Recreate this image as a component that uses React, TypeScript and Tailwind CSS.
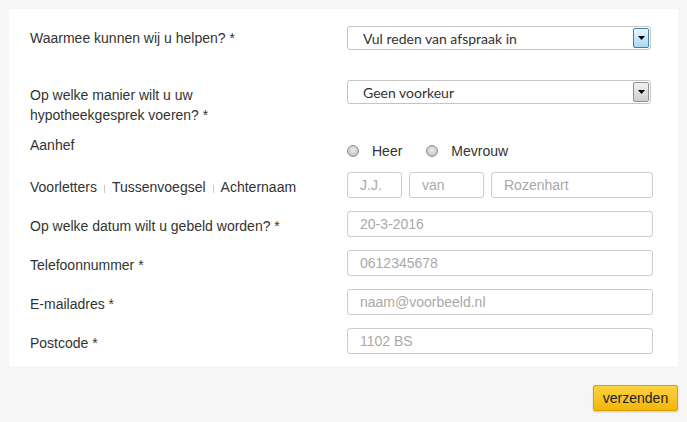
import type { ReactNode } from 'react'

const LABEL = "text-[14px] leading-[20px] text-[#333]"
const ARIAL = "font-[family-name:'Liberation_Sans',Arial,sans-serif]"

function Row({ label, children, className = '', labelClass = 'pt-[5px]' }: { label: ReactNode; children: ReactNode; className?: string; labelClass?: string }) {
  return (
    <div className={`flex ${className}`}>
      <div className={`w-[317px] shrink-0 ${LABEL} ${labelClass}`}>{label}</div>
      <div className="w-[306px]">{children}</div>
    </div>
  )
}

function Select({ value, active }: { value: string; active?: boolean }) {
  return (
    <div className="flex h-[24px] w-[304px] items-stretch rounded-[3px] border border-[#c4c4c4] bg-white">
      <span className="flex flex-1 items-center pl-[15px] font-[family-name:Lato,'Open_Sans',sans-serif] text-[14px] text-[#333]">
        {value}
      </span>
      <span
        className={`my-[1px] mr-[1px] flex w-[16px] items-center justify-center rounded-[2px] border ${
          active
            ? 'border-[#3c7fb1] bg-gradient-to-b from-[#eaf6fd] to-[#a7d9f5]'
            : 'border-[#8e8f8f] bg-gradient-to-b from-[#f2f2f2] to-[#cfcfcf]'
        }`}
      >
        <svg width="7" height="4" viewBox="0 0 7 4">
          <path d="M0 0h7L3.5 4z" fill="#000" />
        </svg>
      </span>
    </div>
  )
}

function Field({ placeholder, className = 'w-full' }: { placeholder: string; className?: string }) {
  return (
    <input
      readOnly
      placeholder={placeholder}
      className={`h-[26px] rounded-[3px] border border-[#cdcdcd] bg-white px-[12px] ${ARIAL} text-[14px] text-[#333] outline-none placeholder:text-[#a9a9a9] ${className}`}
    />
  )
}

function Radio({ label }: { label: string }) {
  return (
    <span className="flex items-center">
      <span className="h-[12px] w-[12px] rounded-full border border-[#8f8f8f] bg-[radial-gradient(circle_at_50%_40%,#ececec_0%,#cfcfcf_55%,#b4b4b4_100%)]" />
      <span className="ml-[13px]">{label}</span>
    </span>
  )
}

function Sep() {
  return <span className="mx-[7px] inline-block h-[8px] w-px bg-[#c8c8c8] align-[-1px]" />
}

export default function App() {
  return (
    <div className={`min-h-screen bg-[#f6f6f6] pt-[9px] ${ARIAL}`}>
      <div className="mx-[9px] bg-white pb-[12px] pl-[21px] pr-[25px] pt-[17px]">
        <Row label="Waarmee kunnen wij u helpen? *" labelClass="pt-[2px]">
          <Select value="Vul reden van afspraak in" active />
        </Row>
        <Row
          className="mt-[30px]"
          labelClass="pt-[5px]"
          label={
            <>
              Op welke manier wilt u uw
              <br />
              hypotheekgesprek voeren? *
            </>
          }
        >
          <Select value="Geen voorkeur" />
        </Row>
        <Row className="mt-[10px]" labelClass="pt-0" label="Aanhef">
          <div className={`flex gap-[24px] pt-[6px] ${LABEL}`}>
            <Radio label="Heer" />
            <Radio label="Mevrouw" />
          </div>
        </Row>
        <Row
          className="mt-[11px]"
          label={
            <>
              Voorletters
              <Sep />
              Tussenvoegsel
              <Sep />
              Achternaam
            </>
          }
        >
          <div className="flex gap-[7px]">
            <Field placeholder="J.J." className="w-[55px]" />
            <Field placeholder="van" className="w-[75px]" />
            <Field placeholder="Rozenhart" className="w-[162px]" />
          </div>
        </Row>
        <Row className="mt-[13px]" label="Op welke datum wilt u gebeld worden? *">
          <Field placeholder="20-3-2016" />
        </Row>
        <Row className="mt-[13px]" label="Telefoonnummer *">
          <Field placeholder="0612345678" />
        </Row>
        <Row className="mt-[13px]" label="E-mailadres *">
          <Field placeholder="naam@voorbeeld.nl" />
        </Row>
        <Row className="mt-[13px]" label="Postcode *">
          <Field placeholder="1102 BS" />
        </Row>
      </div>
      <div className="mt-[19px] flex justify-end pr-[9px]">
        <button className={`h-[26px] w-[85px] rounded-[2px] border border-[#d9a300] bg-gradient-to-b from-[#fdd23c] to-[#f2b600] ${ARIAL} text-[14px] text-[#222] shadow-[0_1px_2px_rgba(0,0,0,0.2)]`}>
          verzenden
        </button>
      </div>
    </div>
  )
}
